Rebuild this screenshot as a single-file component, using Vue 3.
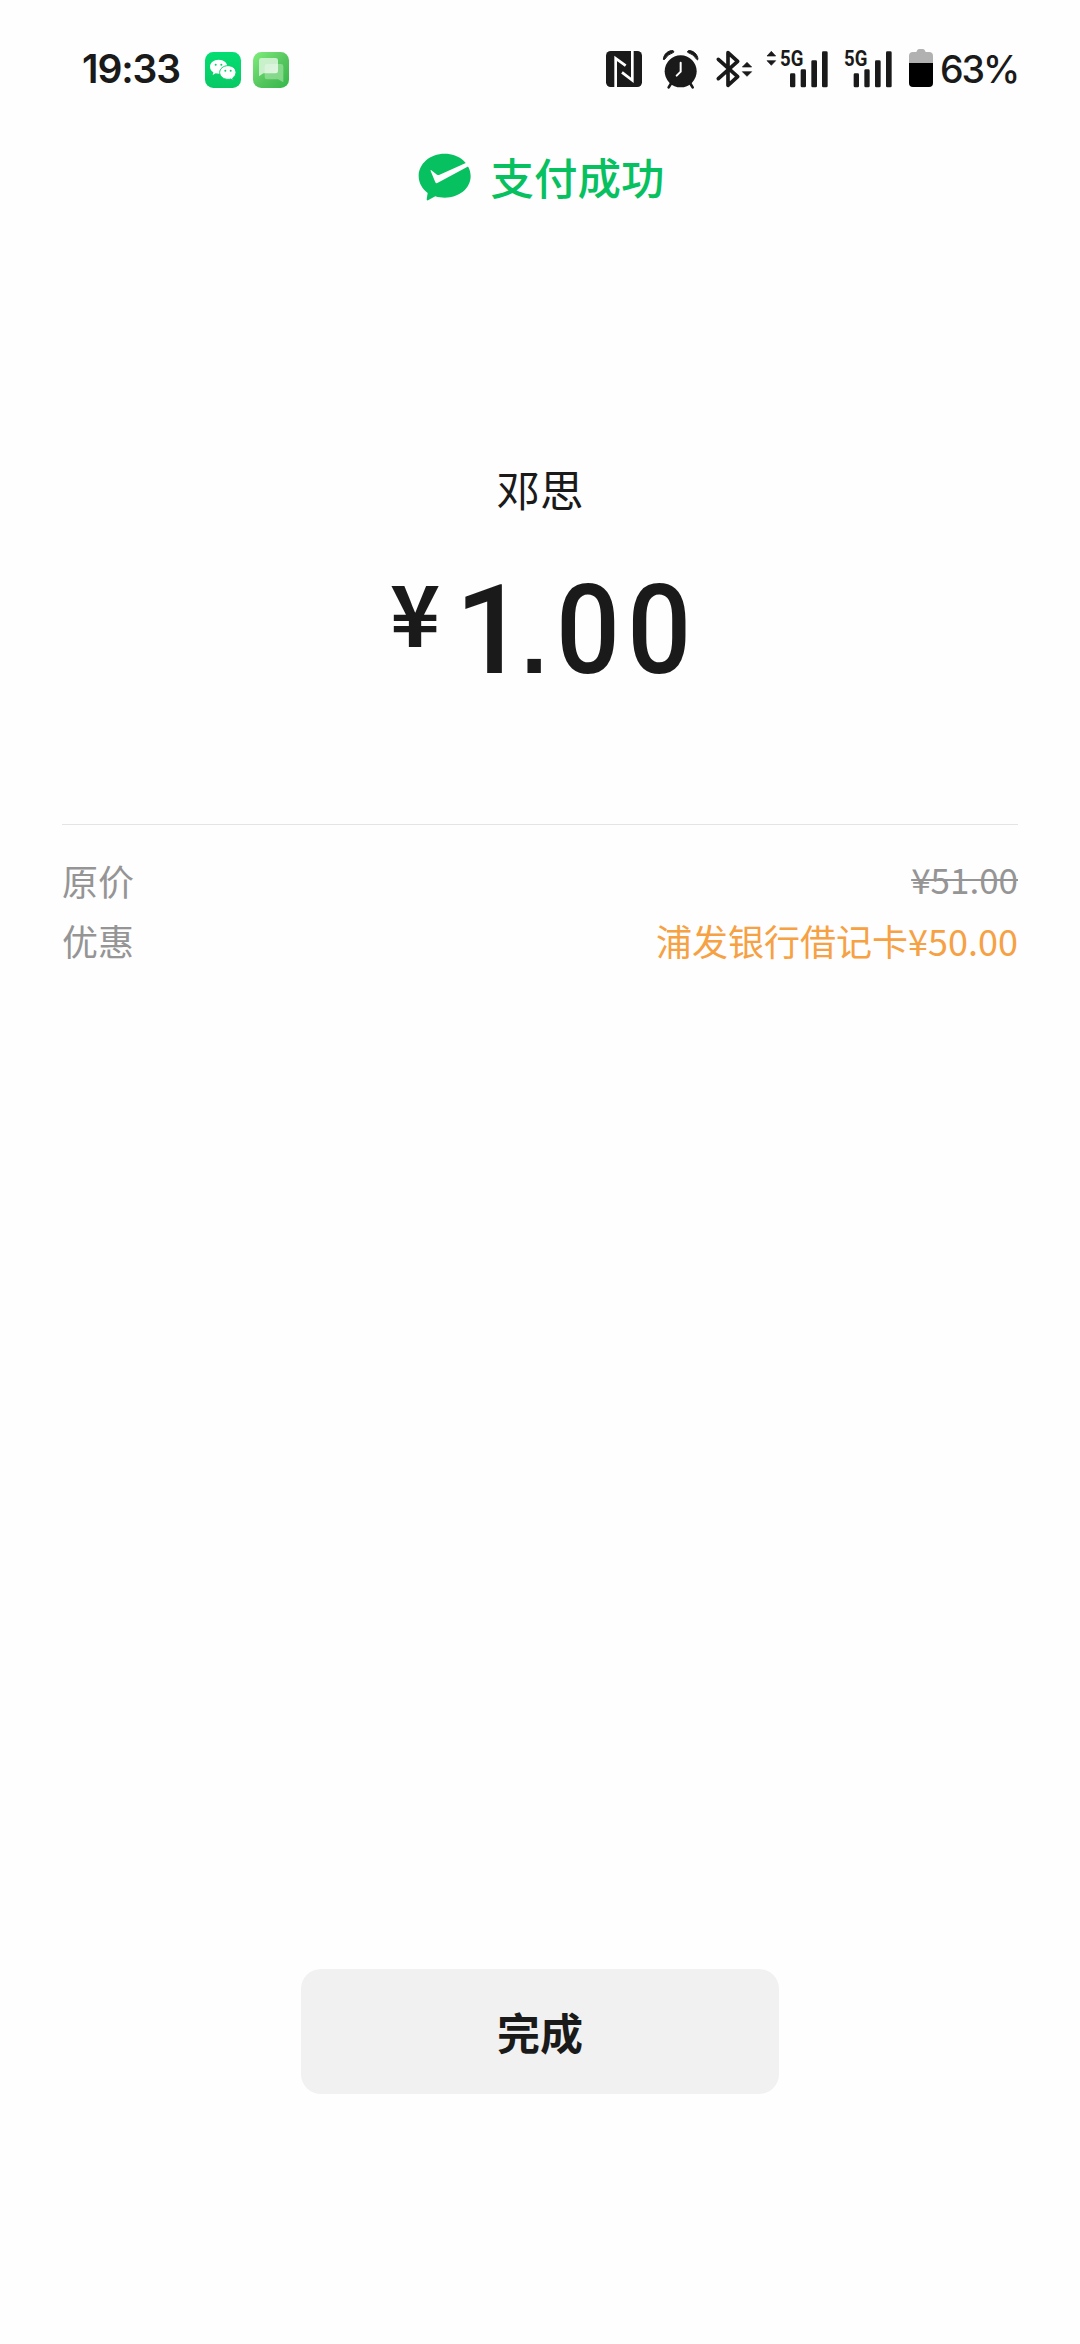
<script setup>
const rows = [
  { label: '原价', value: '¥51.00', kind: 'struck' },
  { label: '优惠', value: '浦发银行借记卡¥50.00', kind: 'discount' },
]
</script>

<template>
  <main class="screen">
    <header class="status">
      <span class="time">19:33</span>
      <svg class="app-icon wechat" width="36" height="36" viewBox="0 0 108 108">
        <defs>
          <linearGradient id="wx" x1="0" y1="0" x2="0" y2="1">
            <stop offset="0" stop-color="#04de72" />
            <stop offset="1" stop-color="#08c864" />
          </linearGradient>
        </defs>
        <rect width="108" height="108" rx="25" fill="url(#wx)" />
        <path d="M41 23c-15 0-26 9-26 21 0 7 4 13 10 17l-2 8 9-5c3 1 6 1 10 1C57 65 67 56 67 44S56 23 41 23z" fill="#fff" />
        <path d="M69 41c-14 0-25 9-25 20.500S55 82 69 82c3 0 6 0 8-1l8 4-2-7c6-4 10-10 10-16.500C93 50 83 41 69 41z" fill="#fff" stroke="#07d16a" stroke-width="3" />
        <g fill="#07d16a">
          <circle cx="32" cy="38" r="3" /><circle cx="49" cy="38" r="3" />
          <circle cx="61" cy="56" r="3" /><circle cx="77" cy="56" r="3" />
        </g>
      </svg>
      <svg class="app-icon sms" width="36" height="36" viewBox="0 0 108 108">
        <defs>
          <linearGradient id="sms" x1="0" y1="0" x2="1" y2="1">
            <stop offset="0" stop-color="#7fee7c" />
            <stop offset=".55" stop-color="#55c55e" />
            <stop offset="1" stop-color="#34b84a" />
          </linearGradient>
          <linearGradient id="bub" x1="0" y1="0" x2="1" y2="1">
            <stop offset="0" stop-color="#fff" stop-opacity=".6" />
            <stop offset="1" stop-color="#fff" stop-opacity=".75" />
          </linearGradient>
        </defs>
        <rect width="108" height="108" rx="25" fill="url(#sms)" />
        <path d="M42 36h42q7 0 7 7v48L75 82H42q-7 0-7-7V43q0-7 7-7z" fill="#a3e5a4" fill-opacity=".65" />
        <path d="M25 18h43q7 0 7 7v32q0 7-7 7H31L18 73V25q0-7 7-7z" fill="url(#bub)" />
      </svg>

      <div class="indicators">
        <svg class="nfc" width="36" height="36" viewBox="0 0 108 108">
          <rect width="108" height="108" rx="14" fill="#1a1a1a" />
          <path d="M29 108V22L59 44M79 0v88L48 64" fill="none" stroke="#fff" stroke-width="8" />
        </svg>
        <svg class="alarm" width="38" height="39" viewBox="0 0 114 117">
          <g fill="#1a1a1a">
            <circle cx="56" cy="64" r="48" />
            <path d="M4 28C5 12 20 0 33 2q4 2 2 5Q16 13 8 28q-2 3-4 0zM108 28C107 12 92 0 79 2q-4 2-2 5 19 6 27 21 2 3 4 0z" stroke="#1a1a1a" stroke-width="3" />
          </g>
          <path d="M28 99l-8 13M84 99l8 13" stroke="#1a1a1a" stroke-width="8" stroke-linecap="round" />
          <path d="M56 38v27L44 77" fill="none" stroke="#fff" stroke-width="6" stroke-linecap="round" stroke-linejoin="round" />
        </svg>
        <svg class="bluetooth" width="37" height="38" viewBox="0 0 111 114">
          <path d="M7 28l58 52-29 26V8l29 26L7 86" fill="none" stroke="#1a1a1a" stroke-width="11" stroke-linecap="round" stroke-linejoin="round" />
          <path d="M93 37l14 14H79zM93 79l14-14H79z" fill="#1a1a1a" stroke="#1a1a1a" stroke-width="2" stroke-linejoin="round" />
        </svg>
        <svg class="signal-data" width="63" height="38" viewBox="0 0 189 114">
          <path d="M16 4l13 14H3zM16 46l13-14H3z" fill="#1a1a1a" stroke="#1a1a1a" stroke-width="2" stroke-linejoin="round" />
          <text x="42" y="49" class="net" textLength="70" lengthAdjust="spacingAndGlyphs">5G</text>
          <g fill="#1a1a1a">
            <rect x="72" y="70" width="16" height="42" rx="4" />
            <rect x="104" y="58" width="16" height="54" rx="4" />
            <rect x="136" y="31" width="17" height="81" rx="4" />
            <rect x="168" y="4" width="17" height="108" rx="4" />
          </g>
        </svg>
        <svg class="signal" width="48" height="38" viewBox="0 0 144 114">
          <text x="0" y="49" class="net" textLength="70" lengthAdjust="spacingAndGlyphs">5G</text>
          <g fill="#1a1a1a">
            <rect x="29" y="70" width="16" height="42" rx="4" />
            <rect x="61" y="58" width="16" height="54" rx="4" />
            <rect x="93" y="31" width="17" height="81" rx="4" />
            <rect x="126" y="4" width="17" height="108" rx="4" />
          </g>
        </svg>
        <svg class="battery" width="24" height="38" viewBox="0 0 72 114">
          <path d="M12 9h10q3-9 8-9h12q5 0 8 9h10q12 0 12 12v21H0V21Q0 9 12 9z" fill="#b1b1b1" />
          <path d="M0 42h72v60q0 12-12 12H12Q0 114 0 102z" fill="#000" />
        </svg>
        <span class="percent">63%</span>
      </div>
    </header>

    <section class="result">
      <svg width="54" height="48" viewBox="0 0 162 144">
        <path d="M80 2C36 2 2 32 2 69c0 20 10 38 27 51l-3 19q0 4 4 3l22-12c9 3 18 4 28 4 44 0 78-28 78-65S124 2 80 2z" fill="#07c160" />
        <path d="M40 52q-3-2-2 2l14 34q2 4 6 2L157 37l-7-10-87 39q-3 1-6-1z" fill="#fff" />
      </svg>
      <h1>支付成功</h1>
    </section>

    <section class="payment">
      <p class="payee">邓思</p>
      <p class="amount"><span class="yen">¥</span><span class="num"><span class="unit">1</span><span class="point">.</span><span class="cents">00</span></span></p>
    </section>

    <section class="details">
      <div v-for="row in rows" :key="row.label" class="row">
        <span>{{ row.label }}</span>
        <span :class="row.kind">{{ row.value }}</span>
      </div>
    </section>

    <button class="done" type="button">完成</button>
  </main>
</template>

<style>
body {
  background: #fefefe;
}
</style>

<style scoped>
.screen {
  display: flex;
  flex-direction: column;
  align-items: center;
  height: 2344px;
  overflow: hidden;
  color: #1a1a1a;
  background: #fefefe;
  font-family: "Noto Sans CJK SC", sans-serif;
}
svg {
  display: block;
  flex: none;
  overflow: visible;
}
p, h1 {
  margin: 0;
}
.status {
  display: flex;
  align-items: flex-start;
  box-sizing: border-box;
  width: 1080px;
  height: 140px;
  padding: 49px 64px 0 82px;
}
.time, .percent {
  font-family: Inter, sans-serif;
  font-weight: 600;
  font-size: 39px;
  line-height: 40px;
  white-space: nowrap;
}
.time {
  width: 123px;
  letter-spacing: -1.100px;
}
.app-icon {
  margin: 3px 12px 0 0;
}
.indicators {
  display: flex;
  margin-left: auto;
}
.nfc {
  margin: 2px 20px 0 0;
}
.alarm {
  margin: 1px 16px 0 0;
}
.bluetooth {
  margin: 1px 13px 0 0;
}
.signal-data {
  margin: 1px 15px 0 0;
}
.signal {
  margin: 1px 17px 0 0;
}
.battery {
  margin-right: 7px;
}
.percent {
  width: 76px;
  font-weight: 500;
  font-size: 37.500px;
  line-height: 42px;
  letter-spacing: -2.100px;
}
.net {
  font: 700 64px Roboto, sans-serif;
  fill: #1a1a1a;
}
.result {
  display: flex;
  height: 80px;
  gap: 19px;
  padding: 13px 0 0 2px;
  box-sizing: border-box;
}
.result h1 {
  color: #07c160;
  font-weight: 500;
  font-size: 43.500px;
  line-height: 48px;
}
.payment {
  display: flex;
  flex-direction: column;
  align-items: center;
  height: 604px;
  padding-top: 239px;
  box-sizing: border-box;
}
.payee {
  font-size: 43.500px;
  line-height: 60px;
  font-weight: 400;
}
.amount {
  display: flex;
  width: 300px;
  height: 120px;
  margin-top: 52px;
}
.yen {
  flex: none;
  width: 65px;
  font-size: 85px;
  line-height: 78px;
  font-weight: 700;
}
.num {
  flex: none;
  font-family: Roboto, sans-serif;
  font-size: 125px;
  line-height: 120px;
  font-weight: 500;
  white-space: nowrap;
}
.unit {
  letter-spacing: -5px;
}
.point {
  font: 700 95px/1 "Liberation Sans", sans-serif;
  letter-spacing: 9px;
}
.cents {
  display: inline-block;
  letter-spacing: 8px;
  transform: scaleX(.9);
  transform-origin: left center;
}
.details {
  width: 956px;
  padding-top: 25px;
  border-top: 1px solid #e4e4e4;
  color: #959595;
  font-size: 36px;
}
.row {
  display: flex;
  justify-content: space-between;
  height: 60px;
  line-height: 60px;
}
.struck {
  font-size: 35px;
  line-height: 58px;
  text-decoration: line-through;
  text-decoration-thickness: 2px;
}
.discount {
  color: #f6a144;
}
.done {
  width: 478px;
  height: 125px;
  margin: auto 0 250px;
  padding: 0 0 2px;
  border: 0;
  border-radius: 20px;
  background: #f1f1f1;
  color: #1a1a1a;
  font: 700 43px "Noto Sans CJK SC", sans-serif;
}
</style>
